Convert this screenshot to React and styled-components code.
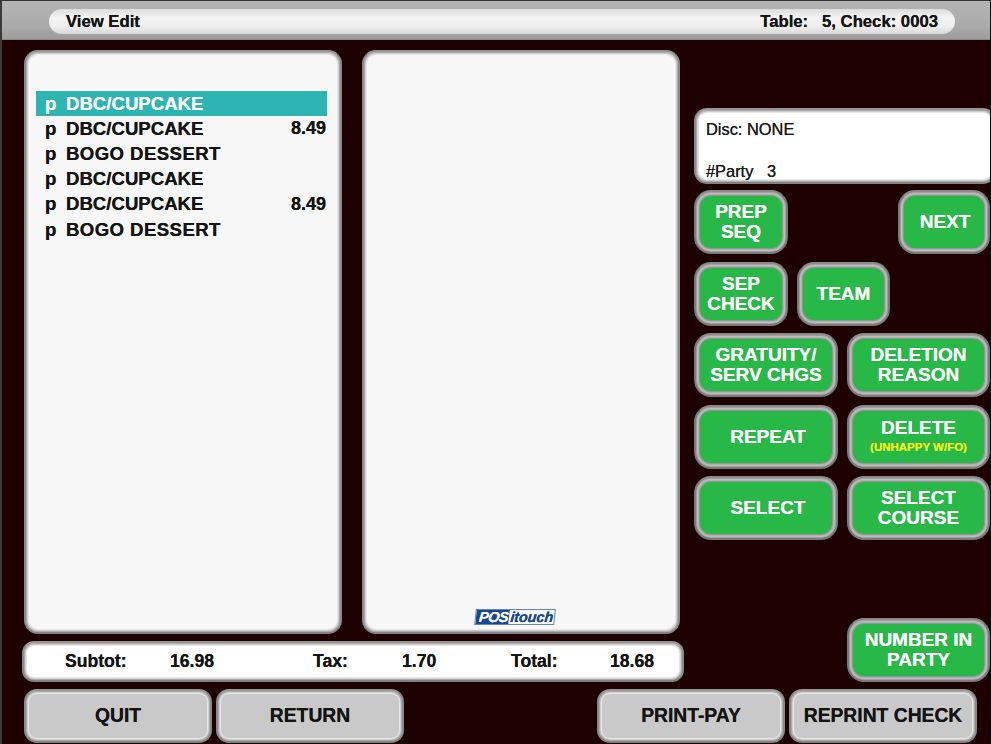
import React from 'react';
import styled, { createGlobalStyle, css } from 'styled-components';

const Global = createGlobalStyle`
  html, body { margin: 0; padding: 0; background: #1f0000; }
  body { font-family: "Liberation Sans", Arial, sans-serif; }
`;

const thinBevel = css`
  border: 2px solid #8a8a8a;
  border-top-color: #969696;
  border-bottom-color: #828282;
  box-shadow: inset 0 0 0 1px #ababab, inset 0 0 0 2px #cfcfcf, inset 0 0 0 3px #e8e8e8;
`;

const thickBevel = css`
  border: 2px solid #7a7a7a;
  border-top-color: #8a8a8a;
  box-shadow: inset 0 0 0 1px #a0a0a0, inset 0 0 0 2px #bdbdbd, inset 0 0 0 3px #b0b0b0, inset 0 0 0 4px #959595;
`;

const Screen = styled.div`
  width: 991px;
  height: 744px;
  box-sizing: border-box;
  overflow: hidden;
  background: #1f0000;
  border-left: 2px solid #3a3a3a;
  border-right: 1px solid #0c0c0c;
  border-top: 1px solid #333;
  display: flex;
  flex-direction: column;
  text-shadow: 0 0 0.5px currentColor;
`;

const Header = styled.header`
  height: 39px;
  box-sizing: border-box;
  padding: 8px 35px 6px 47px;
  background: linear-gradient(#b5b5b5, #a9a9a9 70%, #9c9c9c);
  border-bottom: 1px solid #8a8a8a;
  flex: none;
`;

const HeaderPill = styled.div`
  height: 25px;
  border-radius: 13px;
  background: linear-gradient(#dcdcdc, #f4f4f4 35%, #eeeeee 70%, #d8d8d8);
  display: flex;
  align-items: center;
  justify-content: space-between;
  padding: 0 17px;
  font-size: 16.7px;
  font-weight: 700;
  color: #141414;
  white-space: pre;
`;

const Main = styled.div`
  display: flex;
  flex: none;
  padding-left: 20px;
`;

const LeftColumn = styled.div`
  width: 662px;
  flex: none;
  display: flex;
  flex-direction: column;
  padding-top: 10px;
`;

const Panels = styled.div`
  display: flex;
  gap: 20px;
  padding-left: 2px;
  height: 584px;
`;

const Panel = styled.section`
  ${thinBevel}
  width: 318px;
  box-sizing: border-box;
  border-radius: 14px;
  background: #f7f7f7;
  display: flex;
  flex-direction: column;
  padding: 39px 13px 0 10px;
`;

const Row = styled.div`
  height: 25.2px;
  box-sizing: border-box;
  display: flex;
  align-items: center;
  padding: 0 1px 0 9px;
  font-size: 18.6px;
  font-weight: 700;
  color: ${p => (p.$active ? '#ffffff' : '#141414')};
  background: ${p => (p.$active ? '#2cb5b3' : 'transparent')};
`;

const Flag = styled.span`
  width: 21px;
  flex: none;
`;

const Name = styled.span`
  flex: 1;
  letter-spacing: ${p => (p.$wide ? '0.42px' : '0')};
`;

const Price = styled.span`
  font-size: 18px;
`;

const Logo = styled.div`
  margin-top: auto;
  margin-bottom: 7px;
  margin-right: 9px;
  align-self: center;
  width: 80px;
  height: 16px;
  box-sizing: border-box;
  border: 1px solid #5f84b5;
  background: #fdfdfd;
  transform: skewX(-6deg);
  display: flex;
  align-items: center;
  font-style: italic;
  font-weight: 700;
  font-size: 14.5px;
  line-height: 14px;
  overflow: hidden;
`;

const LogoMark = styled.span`
  background: #16498f;
  color: #fff;
  height: 100%;
  padding: 0 1px 0 3px;
  display: flex;
  align-items: center;
  letter-spacing: -0.4px;
`;

const LogoWord = styled.span`
  color: #16498f;
  padding-left: 1px;
  letter-spacing: -0.1px;
`;

const Totals = styled.div`
  ${thinBevel}
  margin-top: 7px;
  height: 41px;
  box-sizing: border-box;
  border-radius: 12px;
  background: #ffffff;
  display: grid;
  grid-template-columns: 105px 143px 89px 109px 99px 1fr;
  align-items: center;
  padding-left: 41px;
  font-size: 17.6px;
  font-weight: 700;
  color: #141414;
`;

const BottomBar = styled.div`
  margin-top: 7px;
  width: 953px;
  padding-left: 22px;
  display: flex;
  gap: 4px;
  flex: none;
`;

const GrayButton = styled.button`
  ${thinBevel}
  width: 188px;
  height: 54px;
  box-sizing: border-box;
  border-radius: 13px;
  background: #c9c9c9;
  font: 700 19.3px "Liberation Sans", Arial, sans-serif;
  color: #141414;
  text-shadow: inherit;
  padding: 0;
  margin-left: ${p => (p.$push ? 'auto' : '0')};
`;

const RightColumn = styled.aside`
  width: 296px;
  flex: none;
  margin-left: 10px;
  padding-top: 68px;
  display: flex;
  flex-direction: column;
`;

const InfoBox = styled.div`
  ${thinBevel}
  width: 302px;
  height: 76px;
  box-sizing: border-box;
  flex: none;
  border-radius: 13px;
  background: #ffffff;
  padding: 9px 10px 0;
  font-size: 16.4px;
  line-height: 21px;
  color: #1a1a1a;
  white-space: pre;
  overflow: hidden;
`;

const ButtonRows = styled.div`
  margin-top: 6px;
  display: flex;
  flex-direction: column;
  gap: 7.5px;
`;

const ButtonRow = styled.div`
  display: flex;
  gap: 9px;
  justify-content: ${p => (p.$end ? 'flex-end' : p.$spread ? 'space-between' : 'flex-start')};
  margin-top: ${p => p.$top || '0'};
`;

const GreenButton = styled.button`
  ${thickBevel}
  width: ${p => p.$w || 144}px;
  height: 64px;
  box-sizing: border-box;
  border-radius: 17px;
  background: #27b847;
  color: #ffffff;
  font: 700 19px/20px "Liberation Sans", Arial, sans-serif;
  text-shadow: inherit;
  padding: 0 0 0 ${p => p.$nudge || 0}px;
  display: flex;
  flex-direction: column;
  align-items: center;
  justify-content: center;
  flex: none;
`;

const SubLabel = styled.span`
  color: #f0f020;
  font-size: 11.5px;
  line-height: 15px;
  margin-top: 2px;
`;

const rows = [
  { name: 'DBC/CUPCAKE', active: true },
  { name: 'DBC/CUPCAKE', price: '8.49' },
  { name: 'BOGO DESSERT', wide: true },
  { name: 'DBC/CUPCAKE' },
  { name: 'DBC/CUPCAKE', price: '8.49' },
  { name: 'BOGO DESSERT', wide: true },
];

export default function App() {
  return (
    <Screen>
      <Global />
      <Header>
        <HeaderPill>
          <span>View Edit</span>
          <span>{'Table:   5, Check: 0003'}</span>
        </HeaderPill>
      </Header>
      <Main>
        <LeftColumn>
          <Panels>
            <Panel>
              {rows.map((r, i) => (
                <Row key={i} $active={r.active}>
                  <Flag>p</Flag>
                  <Name $wide={r.wide}>{r.name}</Name>
                  {r.price && <Price>{r.price}</Price>}
                </Row>
              ))}
            </Panel>
            <Panel>
              <Logo>
                <LogoMark>POS</LogoMark>
                <LogoWord>itouch</LogoWord>
              </Logo>
            </Panel>
          </Panels>
          <Totals>
            <span>Subtot:</span>
            <span>16.98</span>
            <span>Tax:</span>
            <span>1.70</span>
            <span>Total:</span>
            <span>18.68</span>
          </Totals>
        </LeftColumn>
        <RightColumn>
          <InfoBox>{'Disc: NONE\n\n#Party   3'}</InfoBox>
          <ButtonRows>
            <ButtonRow $spread>
              <GreenButton $w={94}>PREP<br />SEQ</GreenButton>
              <GreenButton $w={92} $nudge={2}>NEXT</GreenButton>
            </ButtonRow>
            <ButtonRow>
              <GreenButton $w={94}>SEP<br />CHECK</GreenButton>
              <GreenButton $w={93}>TEAM</GreenButton>
            </ButtonRow>
            <ButtonRow>
              <GreenButton>GRATUITY/<br />SERV CHGS</GreenButton>
              <GreenButton $w={143}>DELETION<br />REASON</GreenButton>
            </ButtonRow>
            <ButtonRow>
              <GreenButton $nudge={4}>REPEAT</GreenButton>
              <GreenButton $w={143}>DELETE<SubLabel>(UNHAPPY W/FO)</SubLabel></GreenButton>
            </ButtonRow>
            <ButtonRow>
              <GreenButton $nudge={4}>SELECT</GreenButton>
              <GreenButton $w={143}>SELECT<br />COURSE</GreenButton>
            </ButtonRow>
            <ButtonRow $end $top="70.5px">
              <GreenButton $w={143}>NUMBER IN<br />PARTY</GreenButton>
            </ButtonRow>
          </ButtonRows>
        </RightColumn>
      </Main>
      <BottomBar>
        <GrayButton>QUIT</GrayButton>
        <GrayButton>RETURN</GrayButton>
        <GrayButton $push>PRINT-PAY</GrayButton>
        <GrayButton>REPRINT CHECK</GrayButton>
      </BottomBar>
    </Screen>
  );
}
